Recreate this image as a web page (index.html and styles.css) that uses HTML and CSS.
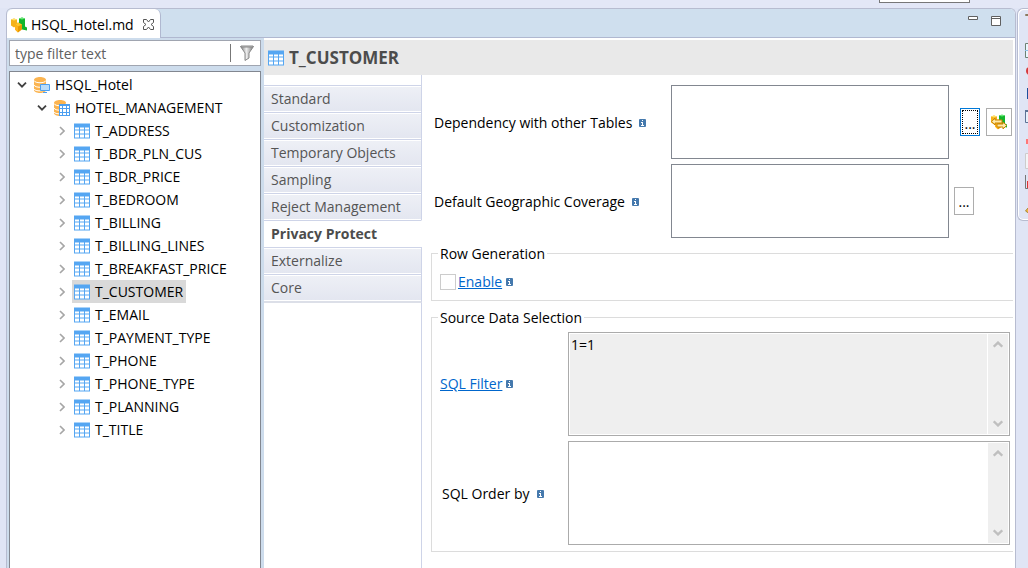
FILE: index.html
```html
<!DOCTYPE html>
<html lang="en">
<head>
<meta charset="utf-8">
<title>HSQL_Hotel.md</title>
<link rel="stylesheet" href="styles.css">
</head>
<body>
<svg class="defs" aria-hidden="true">
  <symbol id="table" viewBox="0 0 16 15"><path fill="#55a6f2" d="M0 0h16v15H0z"/><path fill="#fff" d="M1 4h4v2H1zM6 4h4v2H6zM11 4h4v2h-4zM1 7h4v3H1zM6 7h4v3H6zM11 7h4v3h-4zM1 11h4v3H1zM6 11h4v3H6zM11 11h4v3h-4z"/></symbol>
  <symbol id="db" viewBox="0 0 16 16"><path fill="#fbb450" d="M0 3c0-4 12-4 12 0v10c0 4-12 4-12 0z"/><path fill="none" stroke="#fff" d="M0 3.500c1 3 11 3 12 0M0 8c1 3 11 3 12 0M0 12c1 2.500 11 2.500 12 0"/></symbol>
  <symbol id="info" viewBox="0 0 7 8"><rect width="7" height="8" rx="1" fill="#4579ad"/><path fill="#fff" d="M3 1h1v1H3zM2 3h2v3h1v1H2V6h1V4H2z"/></symbol>
  <symbol id="right" viewBox="0 0 6 10"><path fill="none" stroke="#a6a6a6" stroke-width="1.600" d="M1 1l4 4-4 4"/></symbol>
  <symbol id="down" viewBox="0 0 10 6"><path fill="none" stroke="#404040" stroke-width="1.800" d="M1 .7l4 4 4-4"/></symbol>
  <symbol id="chev" viewBox="0 0 10 7"><path fill="none" stroke="#bfbfbf" stroke-width="2.400" d="M.7 5.700L5 1.600l4.300 4.100"/></symbol>
  <symbol id="cubes" viewBox="0 0 16 15"><path fill="#f5b21a" d="M0 2l3-1 3 1v6l-3 2-3-2z"/><path fill="#ffe36b" d="M0 2l3-1 3 1-3 1z"/><path fill="#13b52c" d="M8 1l3-1 3 1v8l2 1v3l-5-1-3-3z"/><path fill="#6bea7a" d="M8 1l3-1 3 1-3 1z"/><path fill="#e99a00" d="M4 7l3-2 4 2v5l-4 3-3-3z"/><path fill="#ffc526" d="M4 7l3-2 4 2-4 2z"/><path fill="#ffb31a" d="M4 7l3 2v6l-3-3z"/></symbol>
</svg>
<div class="workbench">
  <div class="topstrip"><span class="quick"></span></div>
  <main class="editor">
    <header class="tabbar">
      <div class="tab"><svg class="i16"><use href="#cubes"/></svg><span>HSQL_Hotel.md</span>
        <button class="close" aria-label="Close"><svg viewBox="0 0 11 11"><path fill="#fff" stroke="#555" d="M.5.5h3l2 2.500 2-2.500h3v3L8 5.500l2.500 2v3h-3l-2-2.500-2 2.500h-3v-3L3 5.500l-2.500-2z"/></svg></button></div>
      <div class="wincontrols">
        <button aria-label="Minimize"><svg viewBox="0 0 10 10"><path fill="#fff" stroke="#606060" d="M.5.5h9v3h-9z"/></svg></button>
        <button aria-label="Maximize"><svg viewBox="0 0 10 10"><path fill="#fff" stroke="#606060" d="M.5.5h9v9h-9zM0 2.500h10"/></svg></button>
      </div>
    </header>
    <div class="panes">
      <aside class="outline">
        <div class="filter"><input type="text" placeholder="type filter text" aria-label="Filter"><button aria-label="Apply filter"><svg viewBox="0 0 14 16"><defs><linearGradient id="funnel"><stop stop-color="#777"/><stop offset=".45" stop-color="#eee"/><stop offset="1" stop-color="#777"/></linearGradient></defs><path fill="url(#funnel)" stroke="#888" d="M.5 1.500h13L9 8v5l-4 2.500V8z"/><path fill="#ddd" stroke="#888" d="M1 1h12v1H1z"/></svg></button></div>
        <div class="tree">
          <ul>
            <li><div class="node open"><svg class="down"><use href="#down"/></svg><svg class="i16" viewBox="0 0 16 16"><use href="#db"/><path fill="#b9dcfb" stroke="#4c9ff0" d="M6.500 7.500h9v6h-9zM9 15.500h4"/></svg><span>HSQL_Hotel</span></div>
            <ul>
              <li><div class="node open"><svg class="down"><use href="#down"/></svg><svg class="i16" viewBox="0 0 16 16"><use href="#db"/><path fill="#4c9ff0" d="M5 4h11v12H5z"/><path fill="#fff" d="M6 6h2v2H6zM9 6h3v2H9zM13 6h2v2h-2zM6 9h2v3H6zM9 9h3v3H9zM13 9h2v3h-2zM6 13h2v2H6zM9 13h3v2H9zM13 13h2v2h-2z"/></svg><span>HOTEL_MANAGEMENT</span></div>
              <ul>
                <li><div class="node"><svg class="right"><use href="#right"/></svg><span class="item"><svg class="i16"><use href="#table"/></svg>T_ADDRESS</span></div></li>
                <li><div class="node"><svg class="right"><use href="#right"/></svg><span class="item"><svg class="i16"><use href="#table"/></svg>T_BDR_PLN_CUS</span></div></li>
                <li><div class="node"><svg class="right"><use href="#right"/></svg><span class="item"><svg class="i16"><use href="#table"/></svg>T_BDR_PRICE</span></div></li>
                <li><div class="node"><svg class="right"><use href="#right"/></svg><span class="item"><svg class="i16"><use href="#table"/></svg>T_BEDROOM</span></div></li>
                <li><div class="node"><svg class="right"><use href="#right"/></svg><span class="item"><svg class="i16"><use href="#table"/></svg>T_BILLING</span></div></li>
                <li><div class="node"><svg class="right"><use href="#right"/></svg><span class="item"><svg class="i16"><use href="#table"/></svg>T_BILLING_LINES</span></div></li>
                <li><div class="node"><svg class="right"><use href="#right"/></svg><span class="item"><svg class="i16"><use href="#table"/></svg>T_BREAKFAST_PRICE</span></div></li>
                <li><div class="node"><svg class="right"><use href="#right"/></svg><span class="item selected"><svg class="i16"><use href="#table"/></svg>T_CUSTOMER</span></div></li>
                <li><div class="node"><svg class="right"><use href="#right"/></svg><span class="item"><svg class="i16"><use href="#table"/></svg>T_EMAIL</span></div></li>
                <li><div class="node"><svg class="right"><use href="#right"/></svg><span class="item"><svg class="i16"><use href="#table"/></svg>T_PAYMENT_TYPE</span></div></li>
                <li><div class="node"><svg class="right"><use href="#right"/></svg><span class="item"><svg class="i16"><use href="#table"/></svg>T_PHONE</span></div></li>
                <li><div class="node"><svg class="right"><use href="#right"/></svg><span class="item"><svg class="i16"><use href="#table"/></svg>T_PHONE_TYPE</span></div></li>
                <li><div class="node"><svg class="right"><use href="#right"/></svg><span class="item"><svg class="i16"><use href="#table"/></svg>T_PLANNING</span></div></li>
                <li><div class="node"><svg class="right"><use href="#right"/></svg><span class="item"><svg class="i16"><use href="#table"/></svg>T_TITLE</span></div></li>
              </ul></li>
            </ul></li>
          </ul>
        </div>
      </aside>
      <section class="details">
        <h1><svg class="i16"><use href="#table"/></svg>T_CUSTOMER</h1>
        <div class="body">
          <nav>
            <a href="#standard">Standard</a>
            <a href="#customization">Customization</a>
            <a href="#temporary">Temporary Objects</a>
            <a href="#sampling">Sampling</a>
            <a href="#reject">Reject Management</a>
            <a href="#privacy" class="current">Privacy Protect</a>
            <a href="#externalize">Externalize</a>
            <a href="#core">Core</a>
          </nav>
          <form>
            <div class="row">
              <label for="dep">Dependency with other Tables<svg class="info"><use href="#info"/></svg></label>
              <textarea id="dep" class="list"></textarea>
              <div class="actions wide"><button type="button" class="btn focus"><span>...</span></button><button type="button" class="btn square" aria-label="Link tables"><svg class="i16" viewBox="0 0 16 15"><use href="#cubes"/><path fill="#ffe9a8" stroke="#c98400" d="M.7 7L4 3.500v2h7v3H4v2zM15.500 11L12 7.500v2H6v3h6v2z"/></svg></button></div>
            </div>
            <div class="row">
              <label for="geo">Default Geographic Coverage<svg class="info"><use href="#info"/></svg></label>
              <textarea id="geo" class="list"></textarea>
              <div class="actions"><button type="button" class="btn"><span>...</span></button></div>
            </div>
            <fieldset class="generation">
              <legend>Row Generation</legend>
              <div class="check"><input type="checkbox" id="enable" aria-label="Enable"><a href="#enable">Enable</a><svg class="info"><use href="#info"/></svg></div>
            </fieldset>
            <fieldset class="source">
              <legend>Source Data Selection</legend>
              <div class="sql">
                <div class="caption"><a href="#filter">SQL Filter</a><svg class="info"><use href="#info"/></svg></div>
                <div class="scrollbox readonly"><textarea id="filter" aria-label="SQL Filter" readonly>1=1</textarea><div class="bar"><svg><use href="#chev"/></svg><svg class="flip"><use href="#chev"/></svg></div></div>
                <label class="caption order" for="order">SQL Order by<svg class="info"><use href="#info"/></svg></label>
                <div class="scrollbox"><textarea id="order"></textarea><div class="bar"><svg><use href="#chev"/></svg><svg class="flip"><use href="#chev"/></svg></div></div>
              </div>
            </fieldset>
          </form>
        </div>
      </section>
    </div>
  </main>
  <aside class="toolbar">
    <svg viewBox="0 0 16 210">
      <path fill="#fff" stroke="#8a7a60" d="M.5 5.500h8v1h-8z"/>
      <path fill="#eaf6ff" stroke="#6d8274" d="M.5 34.500h15v14H.5z"/><path stroke="#8fc0e8" d="M0 41.500h16M6.500 34v15"/>
      <circle cx="5" cy="62" r="4" fill="#d5383c"/>
      <path fill="#1d4f9c" d="M2 79h10v11H2z"/>
      <path fill="#e8f0fa" stroke="#5d7396" d="M.5 101.500h14v12H.5z"/><path stroke="#5d7396" stroke-width="2" d="M0 102h16"/>
      <path fill="#f77" d="M1 130h12v5H1z"/>
      <path fill="#f4f4f6" stroke="#ccc" d="M.5 144.500h12v15H.5z"/>
      <path fill="none" stroke="#777" d="M.5 166v13.500H16"/><path fill="#d33" d="M2 172h3v7H2z"/>
      <path fill="#f2bd3c" stroke="#a8853c" d="M.5 202l6-7 4 4-7 5z"/>
    </svg>
  </aside>
</div>
</body>
</html>
```
FILE: styles.css
```css
* { box-sizing: border-box; }
body { margin: 0; font: 14px/20px "Open Sans", "Noto Sans", sans-serif; color: #000; background: #e0e5f5; }
ul { list-style: none; margin: 0; padding: 0; }
svg { display: block; flex: none; }
button { padding: 0; border: 0; background: none; font: inherit; }
textarea, input { font: inherit; color: inherit; }
textarea { display: block; resize: none; margin: 0; }
.defs { position: absolute; width: 0; height: 0; }
.i16 { width: 16px; height: 16px; }
.info { width: 7px; height: 8px; }
.workbench { display: grid; grid-template: 8px 1fr / 5px 1fr 11px; column-gap: 1px; height: 100vh; overflow: hidden; }
.topstrip { grid-column: 1 / -1; display: flex; justify-content: flex-end; padding-right: 58px; background: #e3e7f6; }
.quick { width: 91px; height: 3px; border: 1px solid #777; border-top: 0; background: #fff; }
.editor { grid-column: 2; display: flex; flex-direction: column; min-height: 0; border: 1px solid #b7bcd0; border-bottom: 0; border-radius: 6px 6px 0 0; background: #fff; overflow: hidden; }
.tabbar { display: flex; justify-content: space-between; height: 29px; background: #cfdfee; border-bottom: 1px solid #b0b8d0; flex: none; }
.tab { display: flex; align-items: center; height: 29px; padding: 2px 6px 0 4px; background: #fff; border-right: 1px solid #b0b8d0; border-radius: 6px 6px 0 0; gap: 4px; }
.close svg { width: 11px; height: 11px; margin-left: 5px; }
.wincontrols { display: flex; gap: 13px; padding: 7px 14px; align-items: flex-start; }
.wincontrols svg { width: 10px; height: 10px; }
.panes { display: flex; flex: 1; min-height: 0; }
.outline { width: 257px; flex: none; display: flex; flex-direction: column; gap: 5px; padding: 2px 3px 0 2px; background: #cddcec; }
.filter { display: flex; align-items: center; height: 26px; border: 1px solid #a0a5b0; background: #fff; flex: none; }
.filter input { flex: 1; min-width: 0; border: 0; padding: 2px 5px 0; outline: 0; }
.filter input::placeholder { color: #606060; opacity: 1; }
.filter button { height: 18px; padding: 1px 6px 1px 9px; border-left: 1px solid #777; }
.filter button svg { width: 14px; height: 16px; }
.tree { flex: 1; min-height: 0; border: 1px solid #828790; border-bottom: 0; background: #fff; padding: 1px 0 0 7px; }
.tree ul ul { padding-left: 20px; }
.node { display: flex; align-items: center; height: 23px; gap: 7px; white-space: nowrap; }
.node.open .i16 { margin-right: -2px; }
.down { width: 10px; height: 6px; }
.right { width: 6px; height: 10px; margin-left: 2px; }
.item { display: flex; align-items: center; gap: 5px; height: 23px; padding: 0 3px 0 2px; }
.item.selected { background: #d9d9d9; }
.details { flex: 1; min-width: 0; display: flex; flex-direction: column; padding: 2px 2px 0 0; }
h1 { display: flex; align-items: center; gap: 5px; height: 35px; margin: 0; padding: 0 4px; background: #e9e9e9; color: #4c4c4c; font-size: 17px; font-weight: 700; }
.body { flex: 1; display: flex; min-height: 0; }
nav { width: 158px; flex: none; display: flex; flex-direction: column; padding-top: 10px; background: linear-gradient(#ced4e8, #ced4e8) right / 1px 100% no-repeat; }
nav a { height: 27px; padding: 3px 7px; border-top: 1px solid #ced4e8; border-right: 1px solid #ced4e8; background: linear-gradient(#eef0f6, #e3e6f0); box-shadow: inset 0 1px #fff, inset 0 -1px #fff; color: #555; text-decoration: none; white-space: nowrap; }
nav a:last-child { height: 29px; border-bottom: 2px solid #dcdfe8; }
nav a.current { background: #fff; border-right-color: #fff; color: #4c4c4c; font-weight: 700; }
form { flex: 1; min-width: 0; display: flex; flex-direction: column; padding: 10px 0 0 9px; }
.row { display: flex; align-items: center; margin-bottom: 5px; }
.row label { display: flex; align-items: center; gap: 7px; width: 240px; padding: 1px 0 0 3px; white-space: nowrap; }
.list { flex: 1; min-width: 0; height: 74px; border: 1px solid #828790; }
.actions { display: flex; gap: 6px; width: 64px; padding-left: 5px; }
.actions.wide { padding-left: 11px; }
.btn { display: flex; align-items: center; justify-content: center; flex: none; width: 20px; height: 28px; border: 1px solid #adadad; background: #fff; }
.btn span { padding-top: 2px; line-height: 22px; }
.btn.square { width: 26px; }
.btn.focus { border-color: #0078d7; }
.btn.focus span { border: 1px dotted #000; width: 16px; height: 24px; }
fieldset { margin: 0; padding: 0; border: 1px solid #dcdcdc; border-right: 0; min-width: 0; }
legend { margin-left: 6px; padding: 1px 2px 0; }
a { color: #0066cc; }
.check { display: flex; align-items: center; gap: 2px; padding: 8px 8px; }
.check input { appearance: none; width: 16px; height: 16px; margin: 0; border: 1px solid #ccc; background: #fff; }
.check .info { margin-left: 2px; }
.source { margin-top: 6px; }
.sql { display: grid; grid-template-columns: 128px 1fr; gap: 5px 0; padding: 4px 3px 6px 8px; align-items: center; }
.caption { display: flex; align-items: center; gap: 4px; white-space: nowrap; }
.order { padding: 2px 0 0 2px; gap: 7px; }
.scrollbox { display: flex; height: 104px; border: 1px solid #ababab; padding: 1px; background: #fff; }
.scrollbox textarea { flex: 1; min-width: 0; border: 0; padding: 1px; outline: 0; background: #fff; }
.scrollbox.readonly textarea { background: #efefef; }
.bar { width: 20px; margin-left: 1px; display: flex; flex-direction: column; justify-content: space-between; padding: 7px 5px; background: #efefef; }
.bar svg { width: 10px; height: 7px; }
.flip { transform: rotate(180deg); }
.toolbar { grid-column: 3; height: 213px; border: 1px solid #b7bcd0; border-right: 0; border-radius: 6px 0 0 6px; padding-left: 7px; overflow: hidden; box-shadow: inset 1px 1px #fff, inset 0 -1px #fff; }
.toolbar svg { width: 16px; height: 210px; }
```
